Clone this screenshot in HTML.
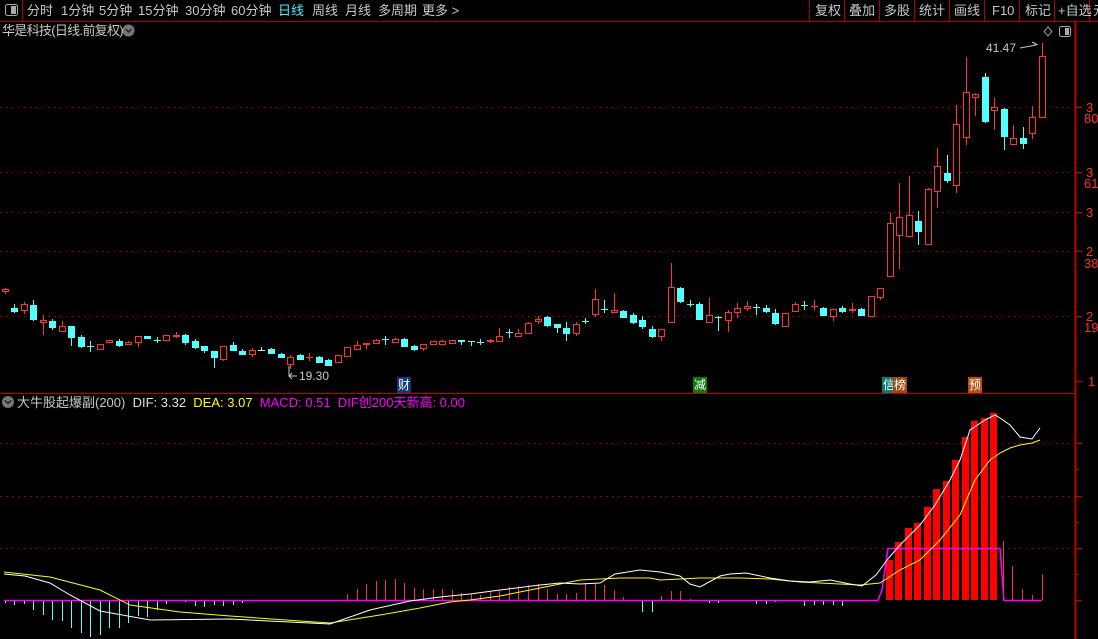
<!DOCTYPE html>
<html><head><meta charset="utf-8"><style>
html,body{margin:0;padding:0;background:#000;width:1098px;height:639px;overflow:hidden;font-family:"Liberation Sans","Noto Sans CJK SC",sans-serif;}
.t{position:absolute;font-size:13px;color:#c8c8c8;white-space:nowrap;line-height:16px}
</style></head><body>
<svg id="s" width="1098" height="639" style="position:absolute;left:0;top:0" xmlns="http://www.w3.org/2000/svg">
<rect width="1098" height="639" fill="#000"/>
<line x1="0" y1="21.5" x2="1098" y2="21.5" stroke="#b00000"/>
<line x1="22.5" y1="0" x2="22.5" y2="21" stroke="#b00000"/>
<g stroke="#b00000"><line x1="809.5" y1="0" x2="809.5" y2="21"/><line x1="844.5" y1="0" x2="844.5" y2="21"/><line x1="879.5" y1="0" x2="879.5" y2="21"/><line x1="914.5" y1="0" x2="914.5" y2="21"/><line x1="949.5" y1="0" x2="949.5" y2="21"/><line x1="984.5" y1="0" x2="984.5" y2="21"/><line x1="1019.5" y1="0" x2="1019.5" y2="21"/><line x1="1054.5" y1="0" x2="1054.5" y2="21"/><line x1="1089.5" y1="0" x2="1089.5" y2="21"/></g>
<rect x="5.5" y="4.5" width="12" height="11" rx="2" fill="none" stroke="#aaa"/><rect x="11" y="6" width="5" height="8" fill="#aaa"/>
<rect x="1059.5" y="26.5" width="11" height="10" rx="2" fill="none" stroke="#aaa"/><rect x="1065" y="28" width="4" height="7" fill="#aaa"/>
<path d="M1048 27 L1052 31.5 L1048 36 L1044 31.5 Z" fill="none" stroke="#999"/>
<circle cx="128.5" cy="30.5" r="6" fill="#777"/><path d="M125.5 29 L128.5 32 L131.5 29" fill="none" stroke="#222" stroke-width="1.5"/>
<circle cx="8" cy="402" r="6" fill="#777"/><path d="M5 400.5 L8 403.5 L11 400.5" fill="none" stroke="#222" stroke-width="1.5"/>
<line x1="0" y1="393.5" x2="1075" y2="393.5" stroke="#c00000"/>
<line x1="1075.5" y1="22" x2="1075.5" y2="639" stroke="#c00000" stroke-width="2"/>
<g stroke="#c00000" stroke-dasharray="1.5,4.5">
<line x1="0" y1="107.5" x2="1075" y2="107.5"/><line x1="0" y1="172.5" x2="1075" y2="172.5"/><line x1="0" y1="212.5" x2="1075" y2="212.5"/><line x1="0" y1="251.5" x2="1075" y2="251.5"/><line x1="0" y1="316.5" x2="1075" y2="316.5"/>
<line x1="0" y1="443.5" x2="1075" y2="443.5"/><line x1="0" y1="496.5" x2="1075" y2="496.5"/><line x1="0" y1="548.5" x2="1075" y2="548.5"/>
</g>
<g stroke="#c00000"><line x1="1075" y1="107.5" x2="1082" y2="107.5"/><line x1="1075" y1="172.5" x2="1082" y2="172.5"/><line x1="1075" y1="212.5" x2="1082" y2="212.5"/><line x1="1075" y1="251.5" x2="1082" y2="251.5"/><line x1="1075" y1="316.5" x2="1082" y2="316.5"/><line x1="1075" y1="381.5" x2="1082" y2="381.5"/>
<line x1="1075" y1="443.5" x2="1082" y2="443.5"/><line x1="1075" y1="469.5" x2="1079" y2="469.5"/><line x1="1075" y1="496.5" x2="1082" y2="496.5"/><line x1="1075" y1="522.5" x2="1079" y2="522.5"/><line x1="1075" y1="548.5" x2="1082" y2="548.5"/><line x1="1075" y1="574.5" x2="1079" y2="574.5"/><line x1="1075" y1="600.5" x2="1082" y2="600.5"/></g>
<g font-family="Liberation Sans, sans-serif" font-size="13" fill="#ff3030">
<text x="1086" y="112">3</text><text x="1084" y="123">80</text>
<text x="1086" y="177">3</text><text x="1084" y="188">61</text>
<text x="1086" y="217">3</text>
<text x="1086" y="256">2</text><text x="1084" y="268">38</text>
<text x="1086" y="321">2</text><text x="1084" y="332">19</text>
<text x="1088" y="386">1</text>
</g>
<text x="986" y="52" font-family="Liberation Sans" font-size="12" fill="#c8c8c8">41.47</text>
<path d="M1020 48 L1036 45 M1032 42 L1037 44.5 L1031 46" stroke="#c8c8c8" fill="none"/>
<text x="299" y="380" font-family="Liberation Sans" font-size="12" fill="#c8c8c8">19.30</text>
<path d="M297 376 L289 376 M292 373 L289 376 L292 379 M289 376 L289 366" stroke="#c8c8c8" fill="none"/>
<g id="c"></g>
<g id="m"></g>
</svg>
<div class="t" style="left:27px;top:3px">分时</div>
<div class="t" style="left:61px;top:3px">1分钟</div>
<div class="t" style="left:99px;top:3px">5分钟</div>
<div class="t" style="left:138px;top:3px">15分钟</div>
<div class="t" style="left:185px;top:3px">30分钟</div>
<div class="t" style="left:231px;top:3px">60分钟</div>
<div class="t" style="left:278px;top:3px;color:#40f0ff">日线</div>
<div class="t" style="left:312px;top:3px">周线</div>
<div class="t" style="left:345px;top:3px">月线</div>
<div class="t" style="left:378px;top:3px">多周期</div>
<div class="t" style="left:422px;top:3px">更多 &gt;</div>
<div class="t" style="left:815px;top:3px">复权</div>
<div class="t" style="left:849px;top:3px">叠加</div>
<div class="t" style="left:884px;top:3px">多股</div>
<div class="t" style="left:919px;top:3px">统计</div>
<div class="t" style="left:954px;top:3px">画线</div>
<div class="t" style="left:992px;top:3px">F10</div>
<div class="t" style="left:1025px;top:3px">标记</div>
<div class="t" style="left:1058px;top:3px">+自选</div>
<div class="t" style="left:1093px;top:3px">元</div>
<div class="t" style="left:2px;top:23px;letter-spacing:-0.7px">华是科技(日线.前复权)</div>
<div class="t" style="left:17px;top:395px">大牛股起爆副(200)&nbsp; <span style="color:#e0e0e0">DIF: 3.32</span>&nbsp; <span style="color:#ffff00">DEA: 3.07</span>&nbsp; <span style="color:#ff00ff">MACD: 0.51&nbsp; DIF创200天新高: 0.00</span></div>
<div class="t" style="left:397px;top:377px;font-size:12px;background:#0a3a78;color:#fff;padding:0 1px">财</div>
<div class="t" style="left:693px;top:377px;font-size:12px;background:#0a7a0a;color:#fff;padding:0 1px">减</div>
<div class="t" style="left:882px;top:377px;font-size:12px;background:#0a7a7a;color:#fff;padding:0 1px">信</div>
<div class="t" style="left:893px;top:377px;font-size:12px;background:#a04a0a;color:#fff;padding:0 1px">榜</div>
<div class="t" style="left:968px;top:377px;font-size:12px;background:#b85010;color:#fff;padding:0 1px">预</div>
<script>
var D=[[289,291,288,294,'r'],[308,311,304,313,'c'],[304,310,302,314,'r'],[305,319,300,321,'c'],[320,322,315,335,'r'],[321,327,319,330,'c'],[326,331,321,331,'r'],[326,337,326,346,'c'],[337,346,335,348,'c'],[346,346,341,352,'c'],[344,349,344,349,'r'],[340,342,340,343,'r'],[341,345,339,347,'c'],[342,344,341,345,'r'],[336,342,336,347,'r'],[336,338,336,339,'c'],[340,340,337,343,'c'],[335,340,335,340,'r'],[335,336,332,338,'r'],[335,342,334,345,'c'],[341,347,339,349,'c'],[346,350,346,353,'c'],[351,357,351,368,'c'],[346,359,346,361,'r'],[345,350,342,350,'c'],[351,354,349,355,'c'],[350,354,348,357,'r'],[350,350,347,351,'w'],[349,353,348,353,'c'],[354,357,353,358,'c'],[357,364,355,369,'r'],[355,359,354,360,'c'],[357,357,353,361,'r'],[357,362,356,363,'c'],[360,365,359,366,'c'],[355,362,355,362,'r'],[347,356,347,357,'r'],[345,349,341,350,'r'],[343,344,343,349,'r'],[340,343,339,344,'r'],[339,339,336,345,'c'],[339,342,338,343,'r'],[339,346,338,347,'c'],[346,349,345,351,'c'],[344,348,344,351,'r'],[341,344,341,345,'r'],[341,344,340,345,'r'],[340,343,340,344,'r'],[340,341,340,345,'c'],[341,341,341,346,'c'],[342,342,339,345,'c'],[340,341,339,343,'r'],[336,341,328,341,'r'],[332,332,329,338,'c'],[333,336,329,337,'r'],[323,333,322,334,'r'],[319,321,316,324,'r'],[317,325,316,327,'c'],[324,327,324,333,'c'],[328,333,322,341,'c'],[324,333,322,336,'r'],[321,321,318,324,'c'],[299,314,289,317,'r'],[309,309,300,313,'c'],[310,312,293,313,'r'],[311,317,310,318,'c'],[315,322,313,324,'c'],[320,326,316,329,'c'],[329,336,326,338,'c'],[329,336,329,341,'r'],[287,322,263,322,'r'],[288,301,287,303,'c'],[304,304,300,307,'c'],[304,319,302,320,'c'],[315,322,298,322,'r'],[317,317,316,331,'c'],[312,320,310,332,'r'],[308,312,303,318,'r'],[306,308,301,311,'r'],[307,307,304,315,'c'],[308,311,305,313,'c'],[313,323,309,325,'c'],[313,326,313,326,'r'],[304,311,302,311,'r'],[305,305,301,310,'c'],[306,306,300,310,'r'],[308,315,307,315,'c'],[309,316,309,321,'r'],[308,311,306,313,'c'],[309,310,303,313,'r'],[309,315,308,316,'c'],[296,316,296,316,'r'],[288,297,288,300,'r'],[223,276,213,276,'r'],[217,235,183,269,'r'],[215,236,176,237,'r'],[221,231,211,245,'c'],[189,244,188,244,'r'],[166,191,148,208,'r'],[173,180,155,183,'c'],[124,185,105,193,'r'],[92,137,57,145,'r'],[94,97,93,116,'r'],[77,121,73,123,'c'],[107,110,98,130,'r'],[109,136,108,150,'c'],[138,144,125,145,'r'],[138,143,127,149,'c'],[117,133,106,139,'r'],[56,117,43,117,'r']];
var g=document.getElementById('c'),h='';
var n=D.length,x0=4.5,x1=1042,dx=(x1-x0)/(n-1);
D.forEach(function(d,i){var x=Math.round(x0+i*dx)+.5,col=d[4]=='r'?'#ff3232':(d[4]=='c'?'#54ffff':'#e0e0e0');
h+='<line x1="'+x+'" y1="'+d[2]+'" x2="'+x+'" y2="'+d[3]+'" stroke="'+col+'"/>';
var hgt=d[1]-d[0];
if(hgt<1){h+='<line x1="'+(x-3.5)+'" y1="'+(d[0]+.5)+'" x2="'+(x+3.5)+'" y2="'+(d[0]+.5)+'" stroke="'+col+'"/>';}
else if(d[4]=='r'){h+='<rect x="'+(x-3)+'" y="'+(d[0]+.5)+'" width="6" height="'+hgt+'" fill="#000" stroke="'+col+'"/>';}
else{h+='<rect x="'+(x-3.5)+'" y="'+d[0]+'" width="7" height="'+(hgt+1)+'" fill="'+col+'"/>';}
});
g.innerHTML=h;
var X=function(i){return Math.round(x0+i*dx)+.5;};
var H=[-3,-5,-4,-10,-15,-20,-21,-28,-33,-37,-35,-28,-28,-23,-16,-17,-10,-4,0,-2,-6,-7,-5,-6,-5,-3,-1,0,-1,-1,0,-1,0,0,0,0,6,11,16,19,20,21,17,12,11,11,11,10,7,6,5,8,9,13,14,15,16,11,6,6,7,17,17,15,10,3,-1,-12,-12,4,9,9,1,0,-3,-3,-1,0,-1,-4,-4,-2,-1,-1,-6,-5,-5,-5,-6,0,0];
var m='';
H.forEach(function(v,i){var x=X(i);if(v==0||x>875)return;
if(v>0){m+='<line x1="'+x+'" y1="600" x2="'+x+'" y2="'+(600-v)+'" stroke="#ff3030"/>';}
else{m+='<line x1="'+x+'" y1="600" x2="'+x+'" y2="'+(600-v)+'" stroke="#54ffff"/>';}
});
[[889,560],[898,542],[908,528],[917,523],[927,507],[936,489],[946,481],[955,460],[965,437],[974,421],[984,418],[993,413]].forEach(function(b){
m+='<rect x="'+(b[0]-3)+'" y="'+b[1]+'" width="7" height="'+(600-b[1])+'" fill="#ff0000"/>';});
[[1003,541],[1012,566],[1022,589],[1032,595],[1042,574]].forEach(function(b){
m+='<line x1="'+(b[0]+.5)+'" y1="600" x2="'+(b[0]+.5)+'" y2="'+b[1]+'" stroke="#ff3030"/>';});
m+='<polyline fill="none" stroke="#ff00ff" stroke-width="1.5" points="4,600.5 878,600.5 882,590 888,548.5 1000,548.5 1004,600.5 1042,600.5"/>';
m+='<polyline fill="none" stroke="#ffff00" points="4,572 50,577 100,590 130,605 180,612 230,616 300,621 330,623 380,615 420,608 450,602 470,600 500,596 540,588 580,580 620,578 650,578 660,580 680,579 700,578 740,578 770,579 800,582 840,584 860,585 880,583 900,570 920,560 940,540 960,515 975,480 990,460 1000,453 1010,448 1020,445 1032,443 1040,440"/>';
m+='<polyline fill="none" stroke="#ffffff" points="4,574 25,576 50,583 70,595 100,611 150,620 230,619 330,624 370,610 410,601 440,597 470,594 500,590 540,585 560,583 580,584 600,583 615,574 640,570 660,572 680,576 690,584 700,587 720,576 730,574 746,573 770,578 790,581 810,582 830,580 850,584 862,586 876,575 887,560 900,545 920,525 935,505 950,480 960,460 970,430 985,420 995,415 1000,418 1010,425 1020,437 1032,439 1040,428"/>';
document.getElementById('m').innerHTML=m;
</script>
</body></html>
